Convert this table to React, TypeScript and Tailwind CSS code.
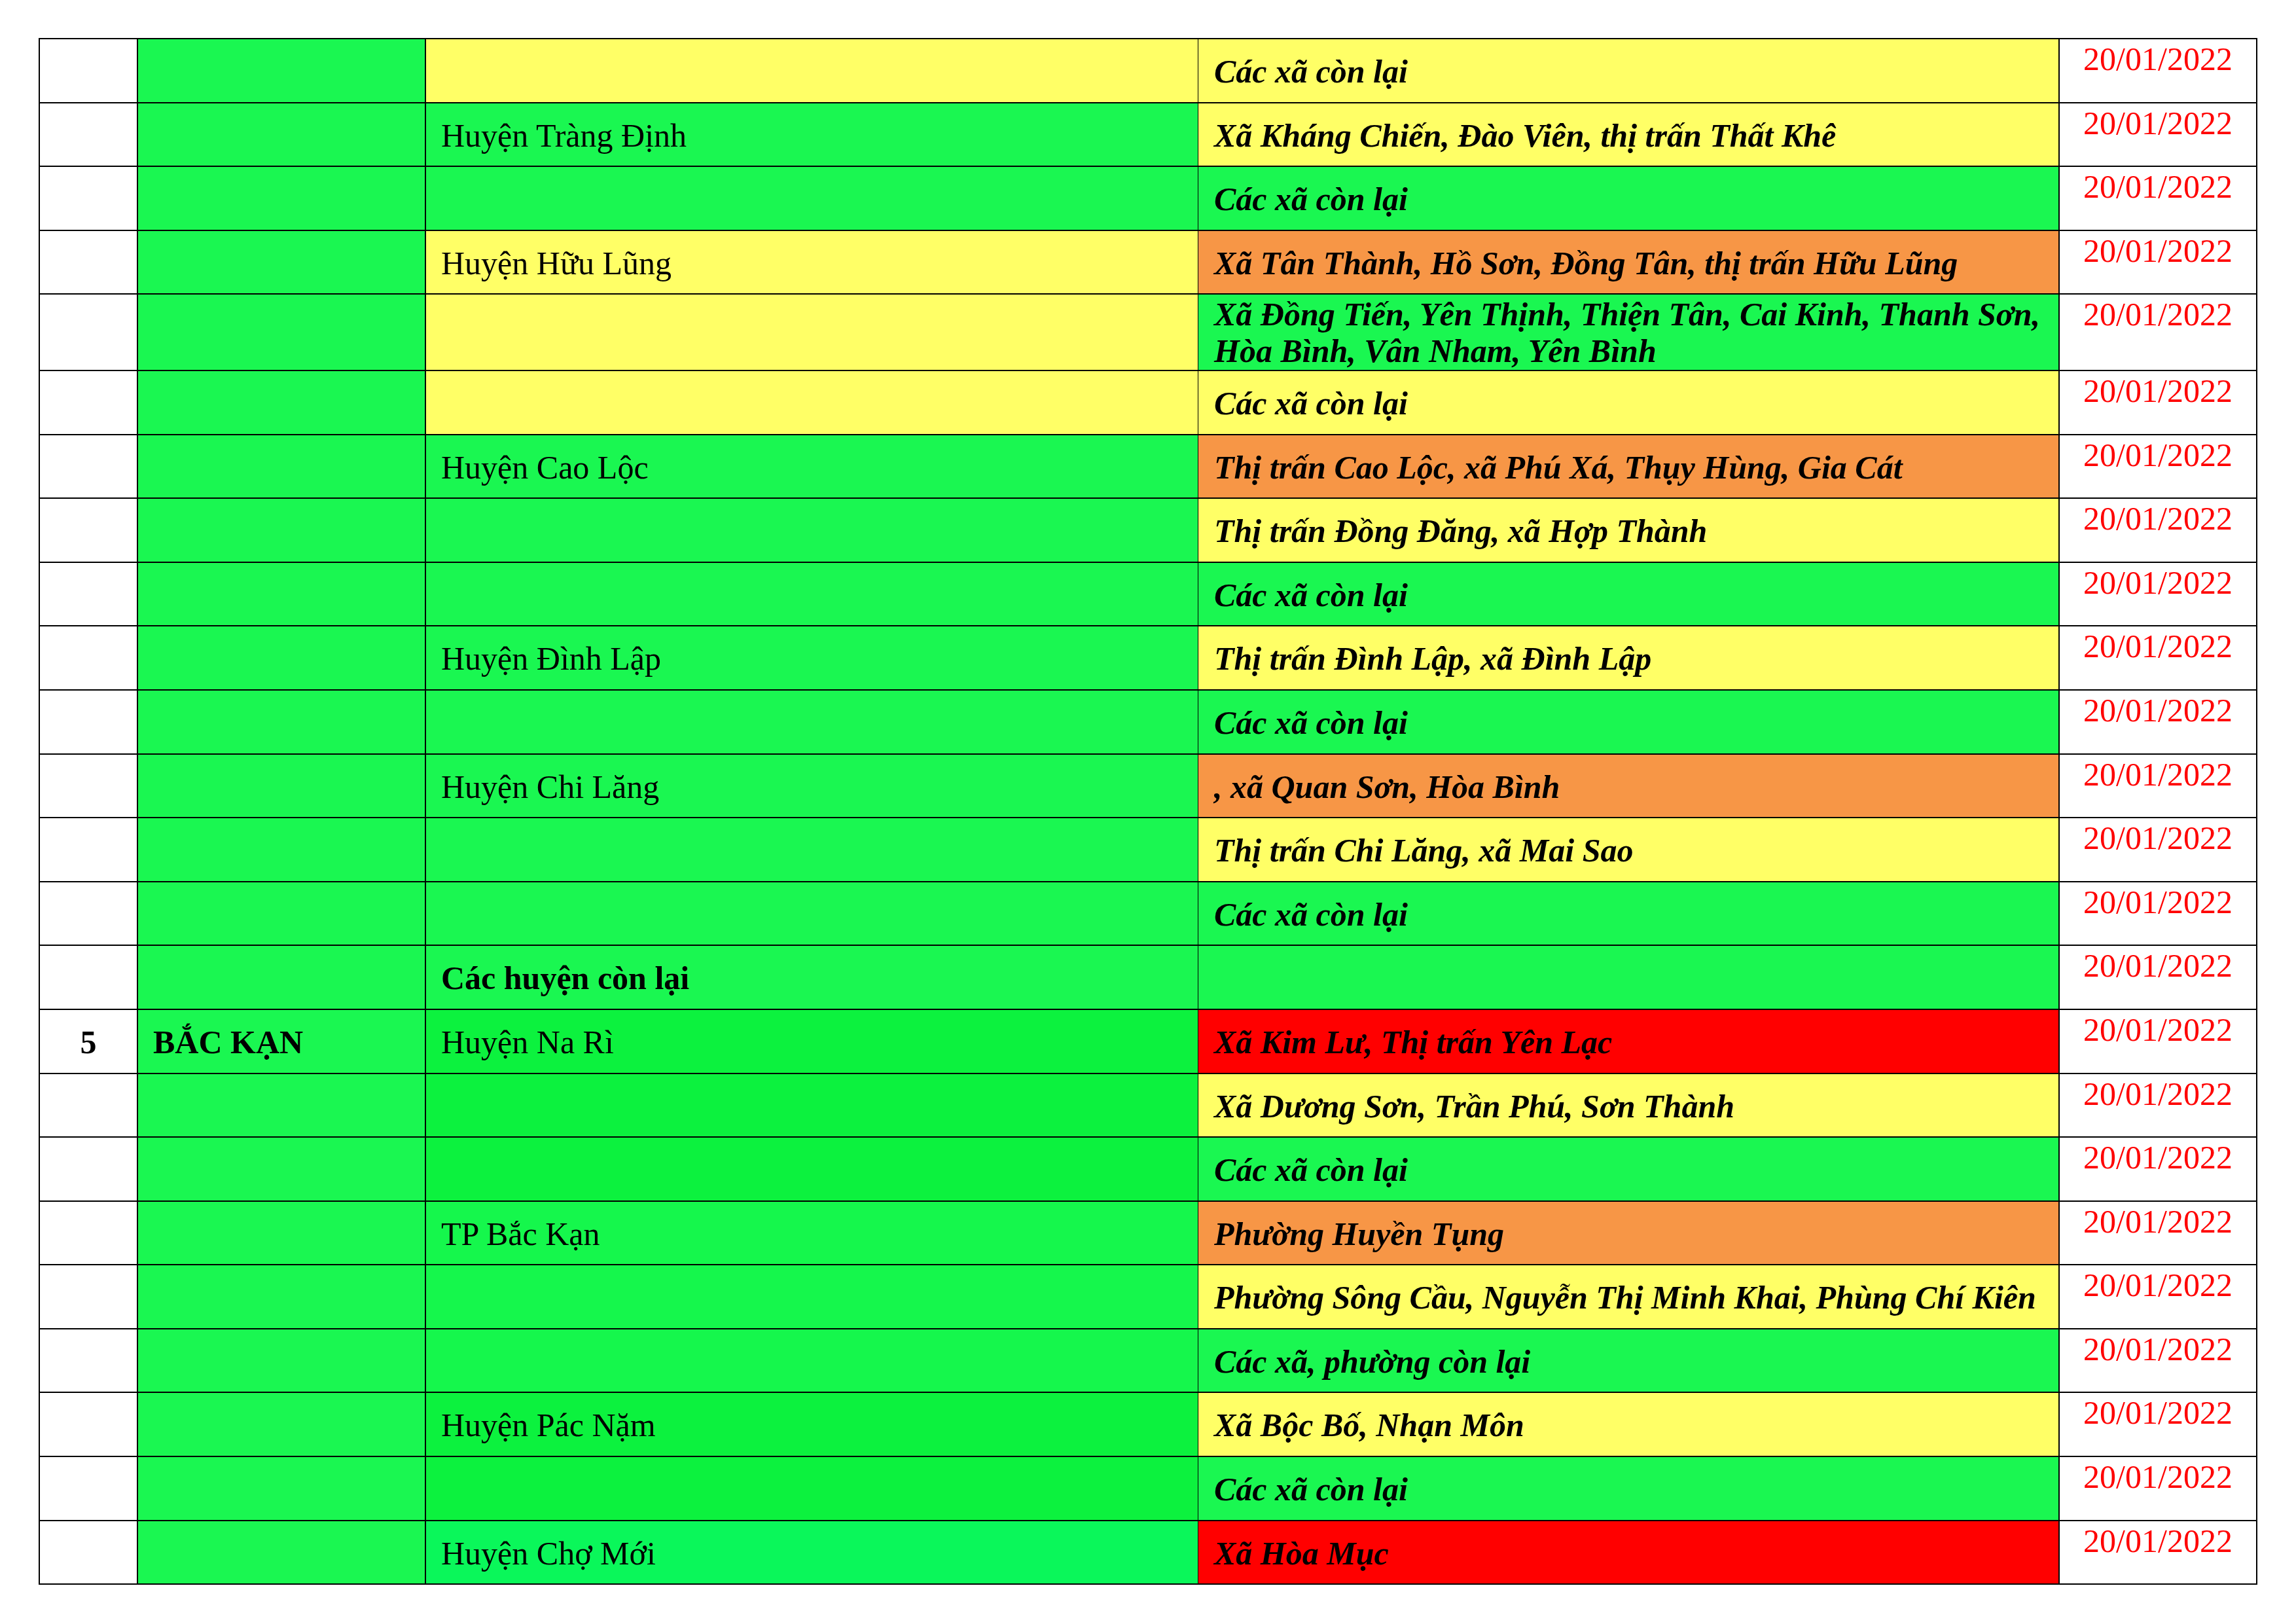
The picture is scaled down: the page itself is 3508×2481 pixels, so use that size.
import React from 'react';

const G = 'bg-[#1af751]';
const Y = 'bg-[#ffff66]';
const O = 'bg-[#f79646]';
const R = 'bg-[#ff0000]';
const GD = 'bg-[#0cf23e]';
const GL = 'bg-[#15f74c]';
const GC = 'bg-[#0af75a]';

type Row = {
  stt?: string;
  tinh?: string;
  huyen?: string;
  bold?: boolean;
  hBg: string;
  xa?: string[];
  xBg: string;
  tall?: boolean;
};

const rows: Row[] = [
  { hBg: Y, xa: ['Các xã còn lại'], xBg: Y },
  { huyen: 'Huyện Tràng Định', hBg: G, xa: ['Xã Kháng Chiến, Đào Viên, thị trấn Thất Khê'], xBg: Y },
  { hBg: G, xa: ['Các xã còn lại'], xBg: G },
  { huyen: 'Huyện Hữu Lũng', hBg: Y, xa: ['Xã Tân Thành, Hồ Sơn, Đồng Tân, thị trấn Hữu Lũng'], xBg: O },
  {
    hBg: Y,
    xa: ['Xã Đồng Tiến, Yên Thịnh, Thiện Tân, Cai Kinh, Thanh Sơn,', 'Hòa Bình, Vân Nham, Yên Bình'],
    xBg: G,
    tall: true,
  },
  { hBg: Y, xa: ['Các xã còn lại'], xBg: Y },
  { huyen: 'Huyện Cao Lộc', hBg: G, xa: ['Thị trấn Cao Lộc, xã Phú Xá, Thụy Hùng, Gia Cát'], xBg: O },
  { hBg: G, xa: ['Thị trấn Đồng Đăng, xã Hợp Thành'], xBg: Y },
  { hBg: G, xa: ['Các xã còn lại'], xBg: G },
  { huyen: 'Huyện Đình Lập', hBg: G, xa: ['Thị trấn Đình Lập, xã Đình Lập'], xBg: Y },
  { hBg: G, xa: ['Các xã còn lại'], xBg: G },
  { huyen: 'Huyện Chi Lăng', hBg: G, xa: [', xã Quan Sơn, Hòa Bình'], xBg: O },
  { hBg: G, xa: ['Thị trấn Chi Lăng, xã Mai Sao'], xBg: Y },
  { hBg: G, xa: ['Các xã còn lại'], xBg: G },
  { huyen: 'Các huyện còn lại', bold: true, hBg: G, xBg: G },
  { stt: '5', tinh: 'BẮC KẠN', huyen: 'Huyện Na Rì', hBg: GD, xa: ['Xã Kim Lư, Thị trấn Yên Lạc'], xBg: R },
  { hBg: GD, xa: ['Xã Dương Sơn, Trần Phú, Sơn Thành'], xBg: Y },
  { hBg: GD, xa: ['Các xã còn lại'], xBg: G },
  { huyen: 'TP Bắc Kạn', hBg: GL, xa: ['Phường Huyền Tụng'], xBg: O },
  { hBg: GL, xa: ['Phường Sông Cầu, Nguyễn Thị Minh Khai, Phùng Chí Kiên'], xBg: Y },
  { hBg: GL, xa: ['Các xã, phường còn lại'], xBg: G },
  { huyen: 'Huyện Pác Nặm', hBg: GD, xa: ['Xã Bộc Bố, Nhạn Môn'], xBg: Y },
  { hBg: GD, xa: ['Các xã còn lại'], xBg: G },
  { huyen: 'Huyện Chợ Mới', hBg: GC, xa: ['Xã Hòa Mục'], xBg: R },
];

function TableRow({ r }: { r: Row }) {
  return (
    <div
      className={`grid grid-cols-[150px_440px_1180px_1316px_300px] grid-rows-1 border-b-2 border-black ${
        r.tall ? 'h-[116.6px]' : 'h-[97.6px]'
      }`}
    >
      {/* STT */}
      <div className="flex items-center justify-center overflow-hidden border-r-2 border-black bg-white pt-[3px] font-bold">
        {r.stt}
      </div>
      {/* Tỉnh */}
      <div className={`flex items-center overflow-hidden border-r-2 border-black pl-[23px] pt-[3px] font-bold ${G}`}>
        {r.tinh}
      </div>
      {/* Huyện */}
      <div
        className={`flex items-center overflow-hidden border-r border-black pl-[23px] pt-[3px] whitespace-nowrap ${r.hBg} ${
          r.bold ? 'font-bold' : ''
        }`}
      >
        {r.huyen}
      </div>
      {/* Xã */}
      <div
        className={`flex items-center overflow-hidden border-r-2 border-black pl-[24px] ${r.tall ? 'pt-[1px]' : 'pt-[3px]'} ${r.xBg}`}
      >
        <div className="font-bold italic whitespace-nowrap">
          {r.xa?.map((l, i) => (
            <div key={i}>{l}</div>
          ))}
        </div>
      </div>
      {/* Ngày */}
      <div className="overflow-hidden bg-white pt-[2px] text-center text-[#ff0000]">20/01/2022</div>
    </div>
  );
}

export default function App() {
  return (
    <div className="min-h-screen w-[3508px] h-[2481px] bg-white font-['Liberation_Serif','Times_New_Roman',serif] text-[50px] leading-[56.6px] text-black">
      <div className="ml-[59px] pt-[58px]">
        <div className="w-[3390px] border-x-2 border-t-2 border-black">
          {rows.map((r, i) => (
            <TableRow key={i} r={r} />
          ))}
        </div>
      </div>
    </div>
  );
}
